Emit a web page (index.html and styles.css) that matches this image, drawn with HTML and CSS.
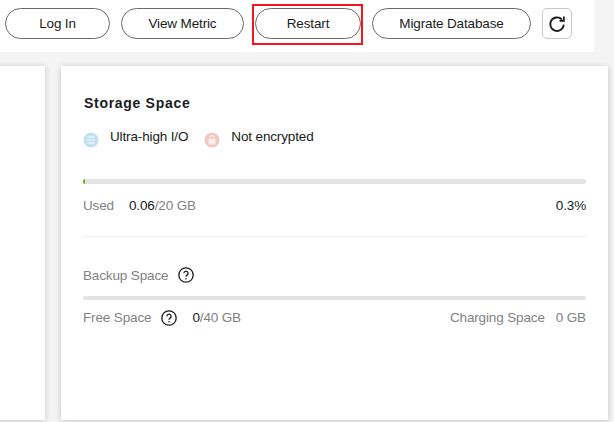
FILE: index.html
```html
<!DOCTYPE html>
<html lang="en">
<head>
<meta charset="utf-8">
<title>Storage Space</title>
<link rel="stylesheet" href="styles.css">
</head>
<body>
<header class="toolbar">
  <button class="btn btn-login">Log In</button>
  <button class="btn btn-metric">View Metric</button>
  <span class="highlight-wrap">
    <button class="btn btn-restart">Restart</button>
    <span class="highlight"></span>
  </span>
  <button class="btn btn-migrate">Migrate Database</button>
  <button class="refresh" aria-label="Refresh">
    <svg width="18" height="18" viewBox="0 0 18 18" fill="none" stroke="#191c20" stroke-width="1.9">
      <path d="M14 4.6A6.8 6.8 0 1 0 15.8 9.6"/>
      <path d="M15.9 1.6v4.2h-4.4" stroke-width="1.7"/>
    </svg>
  </button>
</header>
<main class="content">
  <section class="card card-left"></section>
  <section class="card card-main">
    <h2 class="title">Storage Space</h2>
    <div class="tags">
      <span class="tag tag-io">
        <svg class="tag-icon" width="16" height="16" viewBox="0 0 16 16">
          <circle cx="8" cy="8" r="7.5" fill="#c3e0ee"/>
          <path d="M4.5 5h7M4.5 8h7M4.5 11h7" stroke="#e6f3f8" stroke-width="1.6"/>
        </svg>
        <span class="tag-text">Ultra-high I/O</span>
      </span>
      <span class="tag tag-enc">
        <svg class="tag-icon" width="16" height="16" viewBox="0 0 16 16">
          <circle cx="8" cy="8" r="7.5" fill="#f0c8c0"/>
          <rect x="4.5" y="7" width="7" height="5.5" rx="1" fill="#fbeeeb"/>
          <path d="M6 7V5.6a2 2 0 0 1 4 0V7" fill="none" stroke="#fbeeeb" stroke-width="1.2"/>
        </svg>
        <span class="tag-text">Not encrypted</span>
      </span>
    </div>
    <div class="bar bar-used"><div class="bar-fill"></div></div>
    <div class="row row-used">
      <span><span class="label label-used">Used</span><span class="value">0.06</span><span class="label">/20 GB</span></span>
      <span class="value">0.3%</span>
    </div>
    <hr class="divider">
    <div class="backup-head">
      <span class="label">Backup Space</span>
      <svg class="help" width="16" height="16" viewBox="0 0 16 16"><use href="#q"/></svg>
    </div>
    <div class="bar bar-backup"></div>
    <div class="row row-backup">
      <span class="free">
        <span class="label">Free Space</span>
        <svg class="help" width="16" height="16" viewBox="0 0 16 16"><use href="#q"/></svg>
        <span class="free-val"><span class="value">0</span><span class="label">/40 GB</span></span>
      </span>
      <span class="label">Charging Space<span class="charge-val">0 GB</span></span>
    </div>
  </section>
</main>
<svg class="defs" width="0" height="0">
  <symbol id="q" viewBox="0 0 16 16">
    <circle cx="8" cy="8" r="7.2" fill="none" stroke="#191c20" stroke-width="1.3"/>
    <path d="M5.9 6.3a2.1 2.1 0 1 1 3.2 1.8c-.8.5-1.1.9-1.1 1.7" fill="none" stroke="#191c20" stroke-width="1.3"/>
    <circle cx="8" cy="11.7" r=".8" fill="#191c20"/>
  </symbol>
</svg>
</body>
</html>
```
FILE: styles.css
```css
* { box-sizing: border-box; }
html, body { margin: 0; height: 100%; overflow: hidden; }
body {
  background: #f4f4f4;
  font-family: "Liberation Sans", Arial, sans-serif;
  font-size: 13.5px;
  letter-spacing: -0.14px;
  color: #191c20;
}
.toolbar {
  display: flex;
  align-items: center;
  gap: 11px;
  width: 594px;
  height: 52px;
  padding: 0 0 5px 5px;
  background: #fff;
}
.btn {
  height: 31px;
  padding: 0 0 1px;
  border: 1px solid #6a6a6a;
  border-radius: 16px;
  background: #fff;
  color: #191c20;
  font: 13.5px "Liberation Sans", Arial, sans-serif;
  letter-spacing: -0.14px;
}
.btn-login { width: 105px; }
.btn-metric { width: 123px; }
.btn-restart { width: 106px; display: block; }
.btn-migrate { width: 159px; }
.highlight-wrap { position: relative; display: block; }
.highlight {
  position: absolute;
  left: -3px;
  right: -2px;
  top: -4px;
  bottom: -6px;
  border: 2px solid #f5161c;
}
.refresh {
  display: flex;
  align-items: center;
  justify-content: center;
  width: 30px;
  height: 31px;
  padding: 0;
  border: 1px solid #c9c9c9;
  border-radius: 5px;
  background: #fff;
}
.content {
  display: flex;
  gap: 16px;
  margin-top: 14px;
  margin-left: -4px;
  height: 354px;
}
.card {
  background: #fff;
  box-shadow: 0 1px 6px rgba(0, 0, 0, 0.2);
}
.card-left { width: 49px; }
.card-main {
  width: 547px;
  padding: 29px 22px 0 22px;
}
.title {
  margin: 0 0 0 1px;
  font-size: 14px;
  line-height: 17px;
  font-weight: 700;
  letter-spacing: 0.7px;
}
.tags {
  display: flex;
  gap: 16px;
  margin-top: 16px;
  height: 20px;
  line-height: 16px;
}
.tag { display: flex; gap: 11px; }
.tag-icon { margin-top: 4px; flex: none; }
.tag-text { margin-top: 1px; }
.bar {
  height: 5px;
  border-radius: 3px;
  background: #e4e4e4;
  overflow: hidden;
}
.bar-used { margin-top: 31px; }
.bar-fill { width: 0.4%; height: 100%; background: #5fb30a; }
.bar-backup { margin-top: 13px; height: 4px; }
.row {
  display: flex;
  justify-content: space-between;
  line-height: 16px;
}
.row-used { margin-top: 14px; }
.row-backup { margin-top: 10px; }
.label { color: #828282; }
.label-used { margin-right: 15px; }
.value { color: #191c20; }
.divider {
  margin: 22px 0 0;
  border: 0;
  border-top: 1px solid #eeeeee;
}
.backup-head {
  display: flex;
  align-items: center;
  gap: 10px;
  margin-top: 30px;
  height: 16px;
}
.free { display: flex; align-items: center; gap: 10px; }
.free-val { margin-left: 5px; }
.charge-val { margin-left: 11px; }
.help { flex: none; }
.defs { position: absolute; }
```
